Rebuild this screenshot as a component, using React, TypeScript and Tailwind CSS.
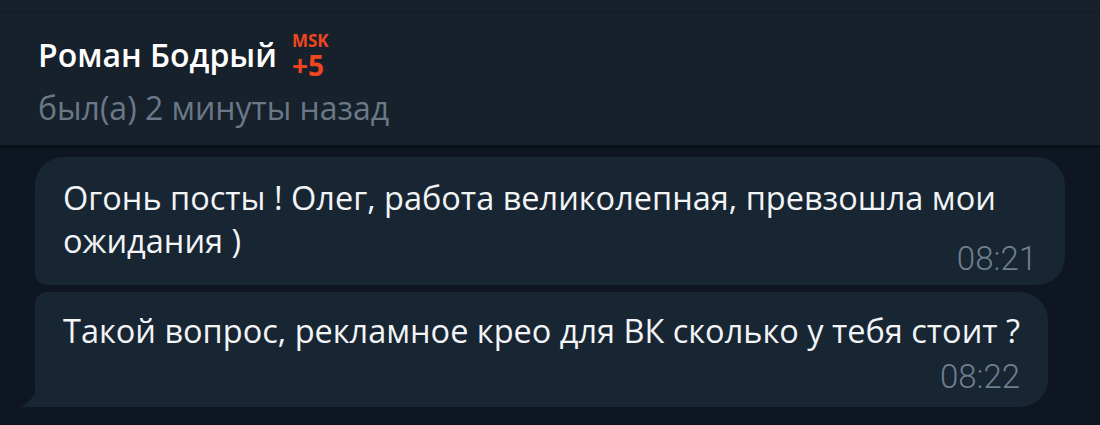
const MESSAGES = [
  {
    id: 1,
    text: "Огонь посты ! Олег, работа великолепная, превзошла мои ожидания )",
    time: "08:21",
    shape: "rounded-[28px] rounded-bl-[12px] pt-[19px] pb-[9px]",
    timeGap: "-mt-[20px]",
  },
  {
    id: 2,
    text: "Такой вопрос, рекламное крео для ВК сколько у тебя стоит ?",
    time: "08:22",
    shape: "rounded-[28px] rounded-tl-[12px] rounded-bl-none pt-[17px] pb-[13px]",
    timeGap: "mt-[8px]",
  },
];

function Bubble({ text, time, shape, timeGap, tail }: { text: string; time: string; shape: string; timeGap: string; tail?: boolean }) {
  return (
    <div className={`relative w-fit max-w-[1030px] ${shape} bg-[#182533] px-[28px]`}>
      <p className="text-[32.5px] leading-[43px] text-[#f2f4f6]">{text}</p>
      <div className={`flex justify-end ${timeGap}`}>
        <span className="font-['Roboto'] font-light text-[33px] leading-[34px] text-[#6d7f8f]">{time}</span>
      </div>
      {tail ? (
        <svg className="absolute -left-[15px] bottom-0" width="16" height="18" viewBox="0 0 16 18">
          <path d="M16 0 L16 18 L0 18 C7 15 14 9 16 0 Z" fill="#182533" />
        </svg>
      ) : null}
    </div>
  );
}

export default function App() {
  return (
    <div className="h-[425px] w-[1100px] overflow-hidden bg-[#0e1621] font-['Open_Sans',sans-serif]">
      <header className="h-[148px] bg-[#17212b] border-b-[3px] border-[#0b1118]">
        <div className="h-[12px] border-b border-[#121a23]" />
        <div className="px-[38px] pt-[20px]">
          <div className="flex items-start gap-[15px]">
            <h1 className="text-[32px] leading-[40px] font-semibold text-white mt-[3px]">Роман Бодрый</h1>
            <div className="flex flex-col items-start font-bold text-[#f0461f]">
              <span className="text-[17px] leading-[17px]">MSK</span>
              <span className="text-[28px] leading-[28px] mt-[2px]">+5</span>
            </div>
          </div>
          <p className="text-[32px] leading-[40px] text-[#6a7887] mt-[9px]">был(а) 2 минуты назад</p>
        </div>
      </header>
      <div className="flex flex-col gap-[7px] pl-[35px] pt-[9px]">
        {MESSAGES.map((m, i) => (
          <Bubble key={m.id} {...m} tail={i === MESSAGES.length - 1} />
        ))}
      </div>
    </div>
  );
}
